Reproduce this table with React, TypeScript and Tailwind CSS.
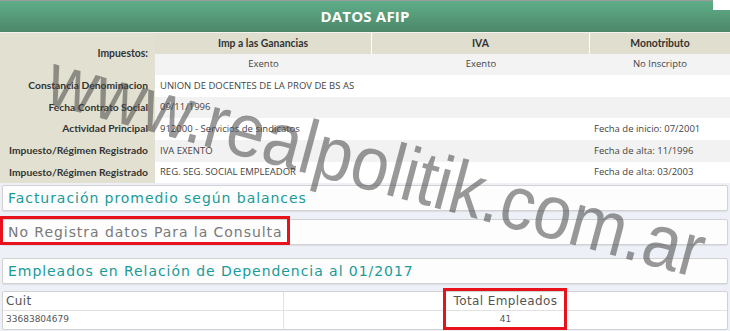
import React from "react";

type Row = {
  label: string;
  value: string;
  extra?: string;
  striped?: boolean;
  h: string;
};

const rows: Row[] = [
  { label: "Constancia Denominacion", value: "UNION DE DOCENTES DE LA PROV DE BS AS", h: "h-[22px]" },
  { label: "Fecha Contrato Social", value: "09/11/1996", striped: true, h: "h-[21px]" },
  { label: "Actividad Principal", value: "912000 - Servicios de sindicatos", extra: "Fecha de inicio: 07/2001", h: "h-[22px]" },
  { label: "Impuesto/Régimen Registrado", value: "IVA EXENTO", extra: "Fecha de alta: 11/1996", striped: true, h: "h-[22px]" },
  { label: "Impuesto/Régimen Registrado", value: "REG. SEG. SOCIAL EMPLEADOR", extra: "Fecha de alta: 03/2003", h: "h-[21px]" },
];

const valueFont = { fontFamily: '"Open Sans", "Noto Sans", sans-serif' };

const Panel = ({ children, muted }: { children: React.ReactNode; muted?: boolean }) => (
  <div
    className={`mx-[2px] h-[26px] flex items-center px-[5px] bg-[#fdfdfd] border border-[#d2d2d2] rounded-[2px] shadow-[0_1px_1px_rgba(0,0,0,0.08)] text-[14px] tracking-[0.95px] whitespace-nowrap ${
      muted ? "text-[#7a7a7a]" : "text-[#1b9a98]"
    }`}
    style={{ fontFamily: '"DejaVu Sans", Verdana, sans-serif' }}
  >
    {children}
  </div>
);

export default function App() {
  return (
    <div
      className="relative w-[730px] h-[331px] overflow-hidden bg-[#eef0f8]"
      style={{ fontFamily: 'Lato, "Open Sans", sans-serif' }}
    >
      <div className="bg-white">
        <div className="h-[1px] bg-[#9b9b9b]" />
        <div
          className="h-[31px] flex items-center justify-center bg-gradient-to-b from-[#5fae89] to-[#4d876a] text-white font-bold text-[15px] tracking-[0.2px]"
          style={{ fontFamily: '"Open Sans", sans-serif' }}
        >
          DATOS AFIP
        </div>
        <div className="h-[1px] bg-[#f4f4ee]" />

        <div className="flex text-[10.4px] text-[#333] whitespace-nowrap">
          <div className="w-[155px] h-[42px] bg-[#e2e1d1] flex items-center justify-end pr-[7px] font-bold">
            Impuestos:
          </div>
          <div className="flex-1 flex flex-col">
            <div className="h-[21px] flex bg-[#dfdecf] font-bold">
              <div className="w-[217px] flex items-center justify-center border-r border-white">Imp a las Ganancias</div>
              <div className="w-[218px] flex items-center justify-center border-r border-white">IVA</div>
              <div className="flex-1 flex items-center justify-center">Monotributo</div>
            </div>
            <div className="h-[21px] flex bg-[#f3f3f3] text-[#444] text-[9.5px]" style={valueFont}>
              <div className="w-[217px] flex items-center justify-center">Exento</div>
              <div className="w-[218px] flex items-center justify-center">Exento</div>
              <div className="flex-1 flex items-center justify-center">No Inscripto</div>
            </div>
          </div>
        </div>

        {rows.map((r, i) => (
          <div key={i} className={`flex whitespace-nowrap ${r.h} ${r.striped ? "bg-[#f2f2f2]" : "bg-white"}`}>
            <div className="w-[155px] bg-[#e2e1d1] flex items-center justify-end pr-[7px] font-bold text-[10.3px] text-[#333]">
              {r.label}
            </div>
            <div className="w-[435px] flex items-center pl-[5px] text-[9.5px] text-[#444]" style={valueFont}>
              {r.value}
            </div>
            <div className="flex-1 flex items-center pl-[4px] text-[9.5px] text-[#444]" style={valueFont}>
              {r.extra}
            </div>
          </div>
        ))}
      </div>

      <div className="flex flex-col pt-[2px]">
        <Panel>Facturación promedio según balances</Panel>
        <div className="h-[8px]" />
        <Panel muted>No Registra datos Para la Consulta</Panel>
        <div className="h-[13px]" />
        <Panel>Empleados en Relación de Dependencia al 01/2017</Panel>
        <div className="h-[7px]" />
        <div
          className="mx-[2px] bg-white border border-[#d2d2d2] rounded-[2px] text-[#555]"
          style={{ fontFamily: '"DejaVu Sans", Verdana, sans-serif' }}
        >
          <div className="flex h-[19px] border-b border-[#e2e2e2] text-[12px] tracking-[0.4px]">
            <div className="w-[281px] flex items-center pl-[3px] border-r border-[#e2e2e2]">Cuit</div>
            <div className="flex-1 flex items-center justify-center">Total Empleados</div>
          </div>
          <div className="flex h-[18px] text-[9px]">
            <div className="w-[281px] flex items-center pl-[3px] border-r border-[#e2e2e2]">33683804679</div>
            <div className="flex-1 flex items-center justify-center">41</div>
          </div>
        </div>
      </div>

      {/* highlight boxes */}
      <div className="absolute left-0 top-[216px] w-[290px] h-[29px] border-[3px] border-[#e8121d]" />
      <div className="absolute left-[443px] top-[288px] w-[124px] h-[42px] border-[3px] border-[#e8121d]" />

      {/* top-right notch */}
      <div className="absolute right-0 top-0 w-[17px] h-[10px] bg-white" />

      {/* watermark */}
      <div
        className="absolute left-[60px] top-[40px] text-[68px] leading-none whitespace-nowrap text-[rgba(70,70,70,0.55)] origin-top-left pointer-events-none"
        style={{ fontFamily: '"Liberation Sans", Arial, sans-serif', transform: "rotate(15deg) scaleY(1.12)" }}
      >
        www.realpolitik.com.ar
      </div>
    </div>
  );
}
